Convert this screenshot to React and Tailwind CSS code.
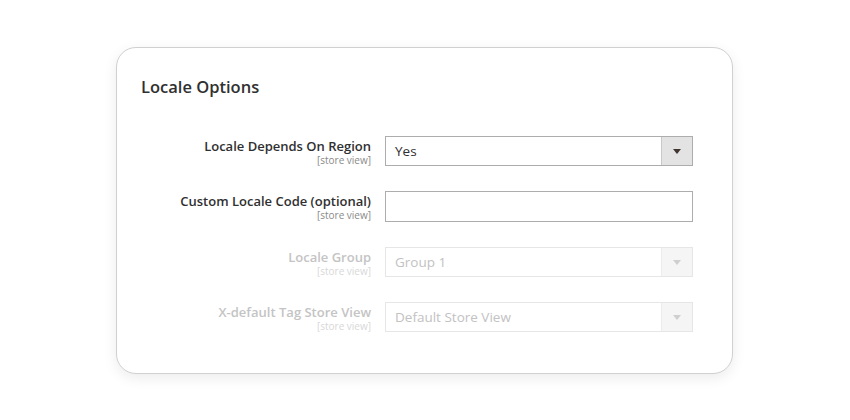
import React from 'react';

const FIELDS = [
  { label: 'Locale Depends On Region', type: 'select', value: 'Yes' },
  { label: 'Custom Locale Code (optional)', type: 'input', value: '' },
  { label: 'Locale Group', type: 'select', value: 'Group 1', disabled: true },
  { label: 'X-default Tag Store View', type: 'select', value: 'Default Store View', disabled: true },
];

function Field({ field }) {
  const dim = field.disabled;
  return (
    <div className="flex items-start">
      <div className="w-[268px] text-right pr-[14px] pt-[2px]">
        <div className={`text-[13px] font-semibold leading-[16px] ${dim ? 'text-[#c4c4c4]' : 'text-[#303030]'}`}>
          {field.label}
        </div>
        <div className={`mt-[1px] text-[10px] leading-[11px] ${dim ? 'text-[#d8d8d8]' : 'text-[#8a8a8a]'}`}>[store view]</div>
      </div>
      {field.type === 'select' ? (
        <div className={`flex h-[30px] w-[308px] border ${dim ? 'border-[#e6e6e6]' : 'border-[#adadad]'} bg-white`}>
          <div className={`flex-1 flex items-center pl-[9px] text-[13.5px] ${dim ? 'text-[#c2c2c2]' : 'text-[#303030]'}`}>
            {field.value}
          </div>
          <div className={`w-[31px] flex items-center justify-center border-l ${dim ? 'border-[#ececec] bg-[#f5f5f5]' : 'border-[#c8c8c8] bg-[#e3e3e3]'}`}>
            <svg width="8" height="5" viewBox="0 0 8 5">
              <path d="M0 0h8L4 5z" fill={dim ? '#cfcfcf' : '#41362f'} />
            </svg>
          </div>
        </div>
      ) : (
        <div className="h-[31px] w-[308px] border border-[#adadad] bg-white" />
      )}
    </div>
  );
}

export default function App() {
  return (
    <div className="w-[850px] h-[420px] bg-white flex items-start justify-center pt-[47px] pr-[1px]" style={{ fontFamily: '"Open Sans", sans-serif' }}>
      <div className="w-[617px] h-[327px] rounded-[20px] border border-[#d0d0d0] bg-white shadow-[0_4px_14px_rgba(0,0,0,0.08)] pl-[24px] pr-[24px] pt-[27px]">
        <h2 className="text-[16.5px] font-semibold text-[#303030] leading-[24px]">Locale Options</h2>
        <div className="mt-[37px] ml-[-24px] flex flex-col gap-[25px]">
          {FIELDS.map((f) => (
            <Field key={f.label} field={f} />
          ))}
        </div>
      </div>
    </div>
  );
}
